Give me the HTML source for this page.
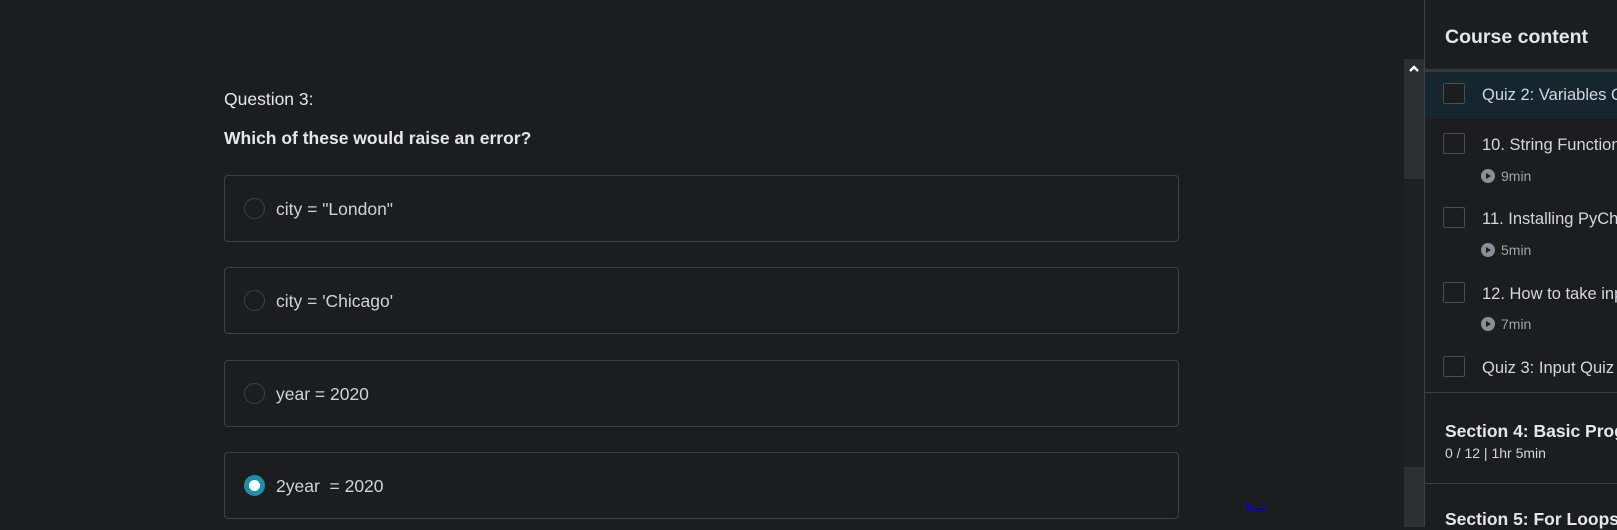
<!DOCTYPE html>
<html><head><meta charset="utf-8"><style>
*{box-sizing:border-box;margin:0;padding:0}
body{width:1617px;height:527px;background:#1c1d1f;overflow:hidden;position:relative;font-family:"Liberation Sans","DejaVu Sans",sans-serif;color:#d1d7dc}
.a{position:absolute;white-space:nowrap}
.card{position:absolute;left:224px;width:955px;height:67px;border:1px solid #3e4143;border-radius:4px}
.radio{position:absolute;left:19px;top:22px;width:21px;height:21px;border-radius:50%;border:1px solid #3e4143;background:#1c1d1f}
.ct{position:absolute;left:51px;top:23px;font-size:17.5px;color:#cfd3d6;line-height:21px}
.cb{position:absolute;left:1443px;width:22px;height:21px;border:1px solid #4a4d50;border-radius:2px;background:#1c1d1f}
.it{position:absolute;left:1482px;font-size:16.5px;color:#d1d7dc;line-height:20px;white-space:nowrap}
.dur{position:absolute;left:1481px;font-size:14px;color:#9da3a7;line-height:16px;white-space:nowrap}
.play{display:inline-block;width:14px;height:14px;border-radius:50%;background:#8a8f93;vertical-align:-2px;margin-right:6px;position:relative}
.play:after{content:"";position:absolute;left:5px;top:3.5px;border-left:5px solid #1c1d1f;border-top:3.5px solid transparent;border-bottom:3.5px solid transparent}
</style></head><body>
<div class="a" style="left:224px;top:89px;font-size:17.5px;color:#e4e6e8">Question 3:</div>
<div class="a" style="left:224px;top:128px;font-size:17.5px;font-weight:bold;color:#e4e6e8">Which of these would raise an error?</div>

<div class="card" style="top:175px"><div class="radio"></div><div class="ct">city = "London"</div></div>
<div class="card" style="top:267px"><div class="radio"></div><div class="ct">city = 'Chicago'</div></div>
<div class="card" style="top:360px"><div class="radio"></div><div class="ct">year = 2020</div></div>
<div class="card" style="top:452px"><div class="radio" style="border:5px solid #1a8fb0;background:#fff"></div><div class="ct">2year&nbsp; = 2020</div></div>

<div class="a" style="left:1247px;top:504px;width:3px;height:5px;background:#0000e0"></div>
<div class="a" style="left:1247px;top:508px;width:19px;height:2px;background:#0000e0"></div>

<div class="a" style="left:1404px;top:59px;width:20px;height:468px;background:#1f2022"></div>
<div class="a" style="left:1404px;top:59px;width:20px;height:120px;background:#2d3032"></div>
<div class="a" style="left:1404px;top:467px;width:20px;height:60px;background:#2d3032"></div>
<svg class="a" style="left:1408px;top:64px" width="12" height="10" viewBox="0 0 12 10"><path d="M2 7 L6 3 L10 7" stroke="#fff" stroke-width="2.4" fill="none"/></svg>

<div class="a" style="left:1424px;top:0;width:1px;height:527px;background:#3e4143"></div>
<div class="a" style="left:1445px;top:26px;font-size:19.5px;font-weight:bold;color:#e4e6e8">Course content</div>
<div class="a" style="left:1425px;top:69px;width:192px;height:3px;background:#34393c"></div>
<div class="a" style="left:1425px;top:72px;width:192px;height:47px;background:#16262e"></div>
<div class="cb" style="top:83px"></div><div class="it" style="top:85px">Quiz 2: Variables Quiz</div>
<div class="cb" style="top:133px"></div><div class="it" style="top:135px">10. String Functions</div>
<div class="dur" style="top:168px"><span class="play"></span>9min</div>
<div class="cb" style="top:207px"></div><div class="it" style="top:209px">11. Installing PyCharm</div>
<div class="dur" style="top:242px"><span class="play"></span>5min</div>
<div class="cb" style="top:282px"></div><div class="it" style="top:284px">12. How to take input</div>
<div class="dur" style="top:316px"><span class="play"></span>7min</div>
<div class="cb" style="top:356px"></div><div class="it" style="top:358px">Quiz 3: Input Quiz</div>
<div class="a" style="left:1425px;top:392px;width:192px;height:1px;background:#3e4143"></div>
<div class="a" style="left:1445px;top:421px;font-size:17.5px;font-weight:bold;color:#e4e6e8">Section 4: Basic Programs</div>
<div class="a" style="left:1445px;top:445px;font-size:14px;color:#d1d7dc">0 / 12 | 1hr 5min</div>
<div class="a" style="left:1425px;top:483px;width:192px;height:1px;background:#3e4143"></div>
<div class="a" style="left:1445px;top:509px;font-size:17.5px;font-weight:bold;color:#e4e6e8">Section 5: For Loops</div>
</body></html>
